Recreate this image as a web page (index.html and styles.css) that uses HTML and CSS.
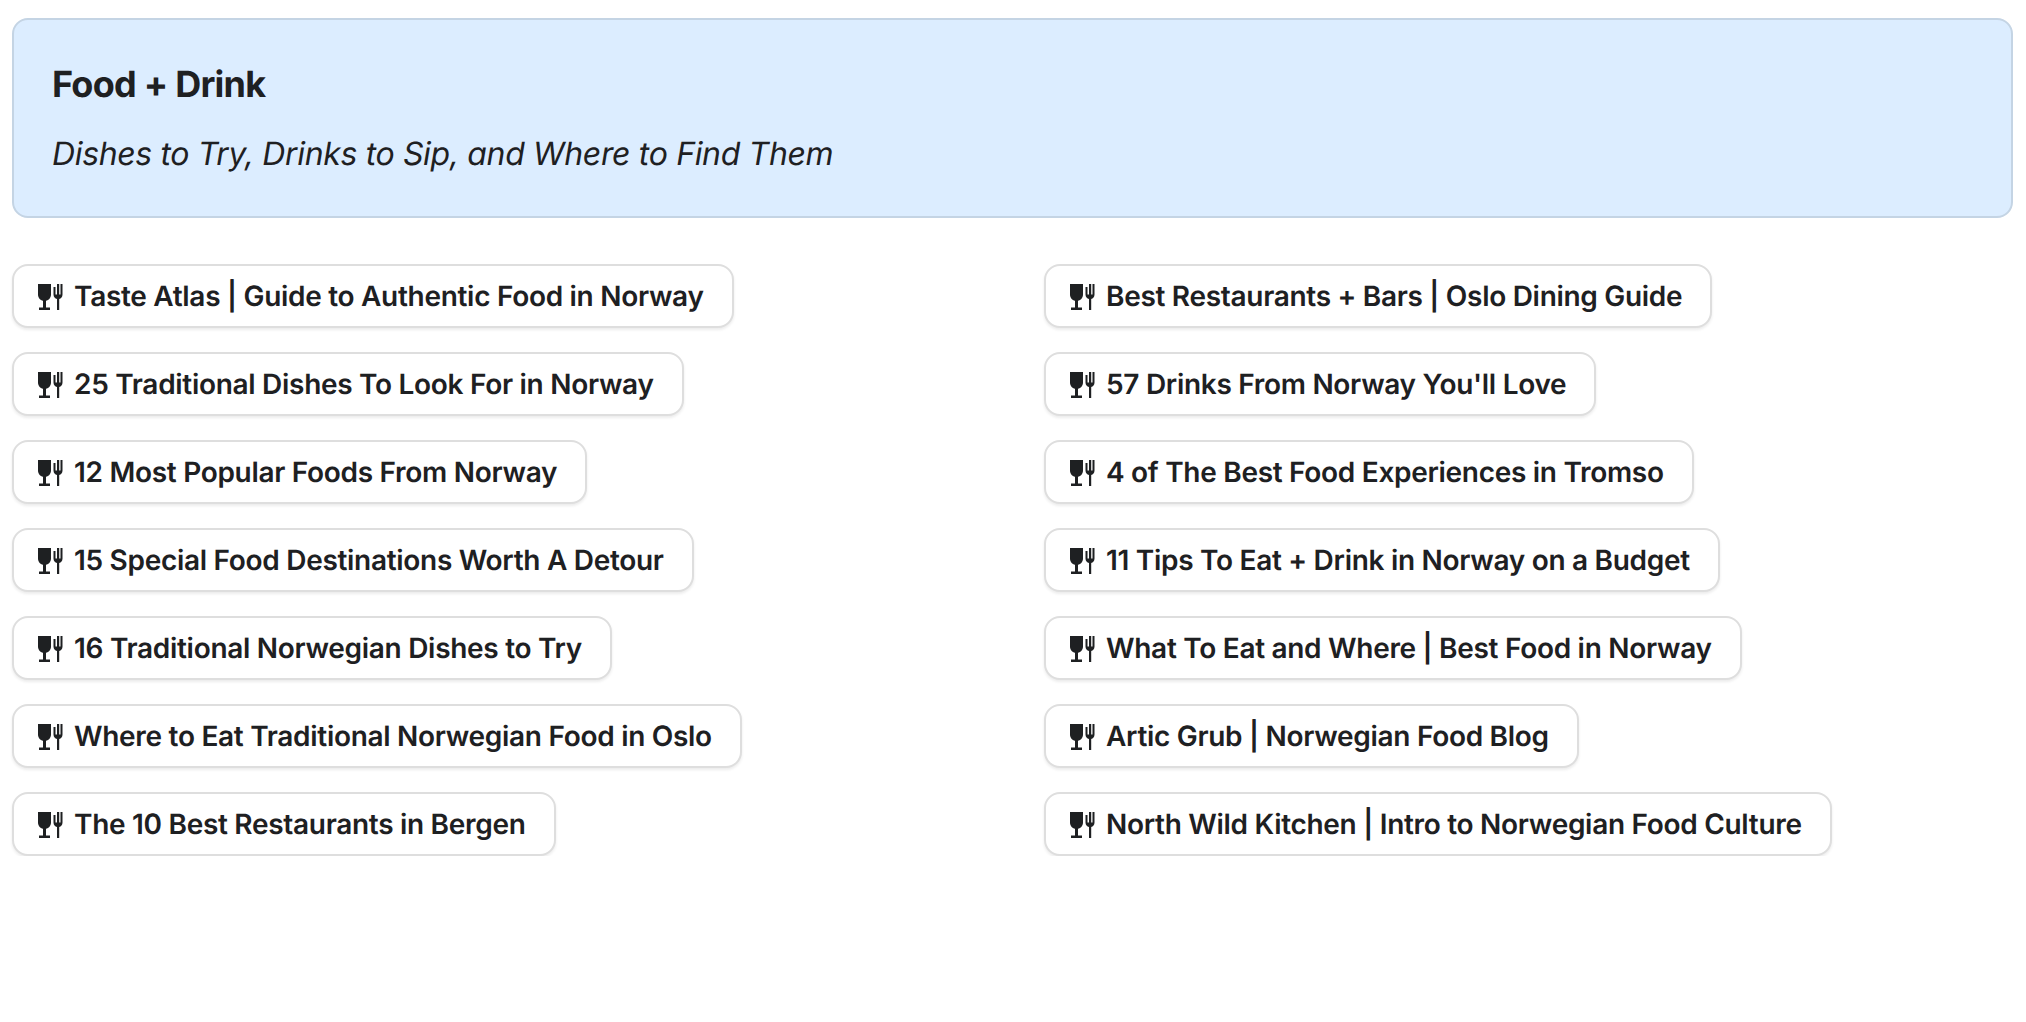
FILE: index.html
```html
<!DOCTYPE html>
<html>
    <head>
        <link rel="stylesheet" href="styles.css">
    </head>
    <body>
        <svg class="defs" width="0" height="0">
            <symbol id="food" viewBox="0 0 26 26">
                <path d="M0 0h13v10.500c0 3.500-2.300 5.700-5 6.200v6.800h4V26H1v-2.500h4v-6.800C2.300 16.200 0 14 0 10.500z"/>
                <path d="M15.500 3h2v7.500h1.500V0h2.200v10.500h1.300V0h2v10.500c0 2.500-1.500 4-3.300 4.500V26H19V15c-1.900-.5-3.500-2-3.500-4.500z"/>
            </symbol>
        </svg>
        <div class="banner">
            <h2>Food + Drink</h2>
            <p>Dishes to Try, Drinks to Sip, and Where to Find Them</p>
        </div>
        <div class="columns">
            <div class="col">
                <a class="btn" href="#"><svg class="icon"><use href="#food"/></svg>Taste Atlas | Guide to Authentic Food in Norway</a>
                <a class="btn" href="#"><svg class="icon"><use href="#food"/></svg>25 Traditional Dishes To Look For in Norway</a>
                <a class="btn" href="#"><svg class="icon"><use href="#food"/></svg>12 Most Popular Foods From Norway</a>
                <a class="btn" href="#"><svg class="icon"><use href="#food"/></svg>15 Special Food Destinations Worth A Detour</a>
                <a class="btn" href="#"><svg class="icon"><use href="#food"/></svg>16 Traditional Norwegian Dishes to Try</a>
                <a class="btn" href="#"><svg class="icon"><use href="#food"/></svg>Where to Eat Traditional Norwegian Food in Oslo</a>
                <a class="btn" href="#"><svg class="icon"><use href="#food"/></svg>The 10 Best Restaurants in Bergen</a>
            </div>
            <div class="col">
                <a class="btn" href="#"><svg class="icon"><use href="#food"/></svg>Best Restaurants + Bars | Oslo Dining Guide</a>
                <a class="btn" href="#"><svg class="icon"><use href="#food"/></svg>57 Drinks From Norway You'll Love</a>
                <a class="btn" href="#"><svg class="icon"><use href="#food"/></svg>4 of The Best Food Experiences in Tromso</a>
                <a class="btn" href="#"><svg class="icon"><use href="#food"/></svg>11 Tips To Eat + Drink in Norway on a Budget</a>
                <a class="btn" href="#"><svg class="icon"><use href="#food"/></svg>What To Eat and Where | Best Food in Norway</a>
                <a class="btn" href="#"><svg class="icon"><use href="#food"/></svg>Artic Grub | Norwegian Food Blog</a>
                <a class="btn" href="#"><svg class="icon"><use href="#food"/></svg>North Wild Kitchen | Intro to Norwegian Food Culture</a>
            </div>
        </div>
    </body>
</html>
```

FILE: styles.css
```css
body{
    margin: 0;
    padding: 18px 13px 0 12px;
    font-family: Inter, "Liberation Sans", sans-serif;
    color: #1e2022;
    background: white;
    text-rendering: geometricPrecision;
}
.defs{
    display: block;
}
.banner{
    height: 200px;
    box-sizing: border-box;
    padding: 42px 38px 0 38px;
    background-color: #dcedff;
    border: 2px solid #c4d4e4;
    border-radius: 16px;
}
.banner h2{
    margin: 0;
    font-size: 36px;
    line-height: 44px;
    font-weight: 700;
    letter-spacing: -0.75px;
}
.banner p{
    margin: 26px 0 0 0;
    font-size: 32px;
    line-height: 44px;
    font-style: italic;
    letter-spacing: -0.35px;
}
.columns{
    display: grid;
    grid-template-columns: 1fr 1fr;
    column-gap: 63px;
    margin-top: 46px;
}
.col{
    display: flex;
    flex-direction: column;
    align-items: flex-start;
    gap: 24px;
}
.btn{
    display: flex;
    align-items: center;
    height: 64px;
    box-sizing: border-box;
    padding: 0 28px 0 24px;
    font-size: 28px;
    font-weight: 600;
    letter-spacing: -0.3px;
    color: #1e2022;
    text-decoration: none;
    background: white;
    border: 2px solid #dedede;
    border-radius: 16px;
    box-shadow: 0 2px 3px rgba(0,0,0,0.08);
}
.icon{
    width: 26px;
    height: 26px;
    margin-right: 10px;
    margin-top: 2px;
    fill: #1e2022;
}
```
